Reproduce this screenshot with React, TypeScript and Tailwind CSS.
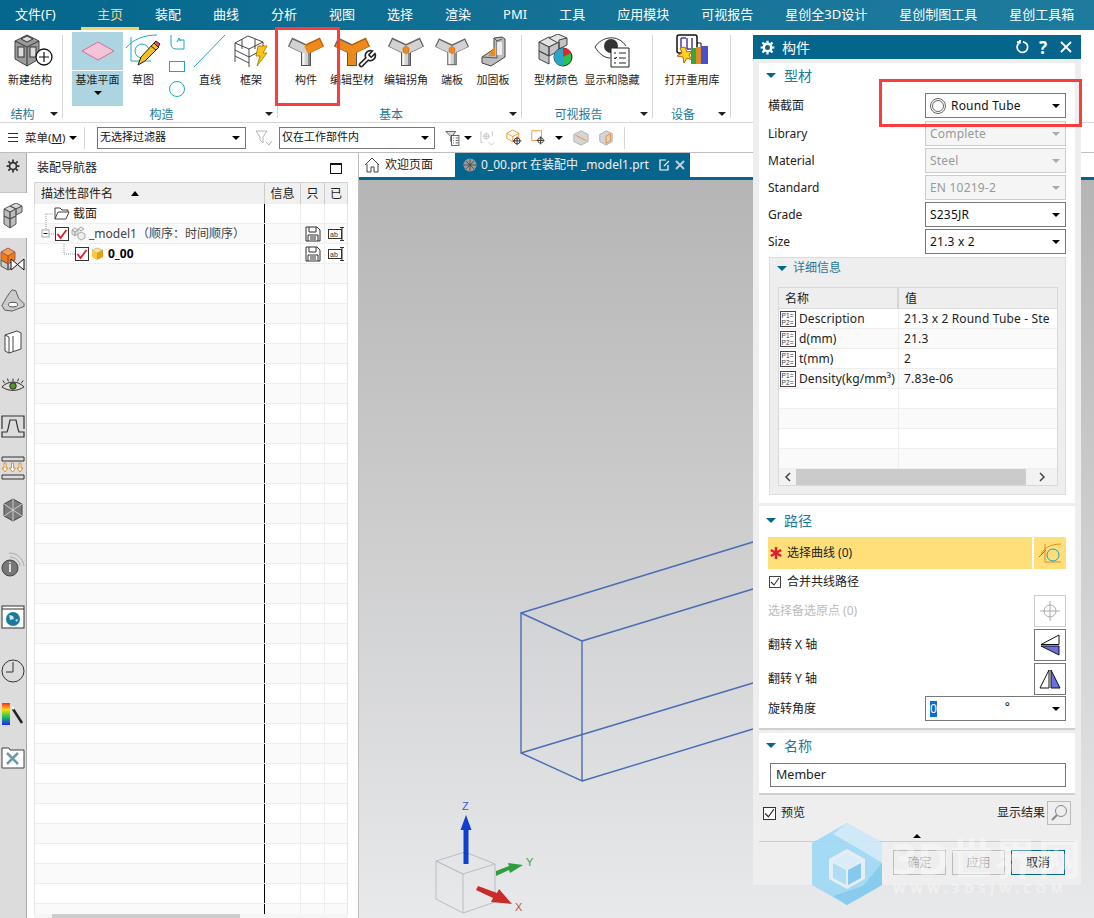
import React from "react";

const FONT = '"Noto Sans","Noto Sans CJK SC",sans-serif';

const Caret = ({ c = "border-t-black", cls = "" }: { c?: string; cls?: string }) => (
  <span className={`inline-block w-0 h-0 border-l-[4px] border-r-[4px] border-t-[4px] border-l-transparent border-r-transparent ${c} ${cls}`} />
);

const YJoint = ({ arms = "edit", w = 36 }: { arms?: "member" | "edit" | "corner"; w?: number }) => {
  const orange = "#ee8a1c";
  const gray = "#d2d2d2";
  const left = arms === "edit" ? orange : gray;
  const right = arms === "corner" ? gray : orange;
  const down = arms === "edit" ? orange : gray;
  return (
    <svg width={w} height={32} viewBox="0 0 36 32">
      <g strokeLinecap="butt" fill="none">
        <path d="M18 14V31" stroke="#555" strokeWidth="10" />
        <path d="M19 15L2 7" stroke="#666" strokeWidth="10" />
        <path d="M17 15L34 7" stroke={right === orange ? "#b85f08" : "#666"} strokeWidth="10" />
        <path d="M18 15V30" stroke={down} strokeWidth="8" />
        <path d="M18 15L3 8" stroke={left} strokeWidth="8" />
        <path d="M18 15L33 8" stroke={right} strokeWidth="8" />
        <path d="M15.5 18V30" stroke="#f6f6f6" strokeWidth="2" opacity={arms === "edit" ? 0 : 1} />
        <path d="M21 18V30" stroke="#8a8a8a" strokeWidth="2" opacity={arms === "edit" ? 0 : 1} />
        {arms === "corner" && <path d="M15 13l3-2 3 2v4l-3 2-3-2z" fill={orange} stroke="#b85f08" strokeWidth=".5" />}
      </g>
    </svg>
  );
};

const Wrench = () => (
  <svg width="20" height="20" viewBox="0 0 24 24" className="absolute right-0 bottom-0" fill="#fff" stroke="#222" strokeWidth="2">
    <path d="M14.7 6.3a1 1 0 0 0 0 1.4l1.6 1.6a1 1 0 0 0 1.4 0l3.77-3.77a6 6 0 0 1-7.94 7.94l-6.91 6.91a2.12 2.12 0 0 1-3-3l6.91-6.91a6 6 0 0 1 7.94-7.94z" />
  </svg>
);

const StructIcon = () => (
  <svg width="46" height="36" viewBox="0 0 46 36">
    <path d="M8 8l12-6 12 6v18l-12 7-12-7z" fill="#9a9a9a" stroke="#444" />
    <path d="M8 8l12 6 12-6M20 14v19" stroke="#333" fill="none" />
    <rect x="11" y="14" width="6" height="10" fill="#ddd" stroke="#333" />
    <rect x="23" y="14" width="6" height="10" fill="#ddd" stroke="#333" />
    <path d="M14 6l6-3 6 3-6 3z" fill="#ddd" stroke="#333" />
    <circle cx="37" cy="24" r="8" fill="#fff" stroke="#111" strokeWidth="1.3" />
    <path d="M32 24h10M37 19v10" stroke="#111" strokeWidth="1.2" />
  </svg>
);

const SketchIcon = () => (
  <svg width="36" height="34" viewBox="0 0 36 34">
    <path d="M1 14C8 5 20 1 32 1" stroke="#1aa7c9" strokeWidth="1" fill="none" />
    <path d="M6 3V27H26" stroke="#1aa7c9" strokeWidth="1" fill="none" />
    <circle cx="17" cy="17" r="7" stroke="#1aa7c9" fill="none" />
    <path d="M13 31l3-8 13-14 5 4-14 14z" fill="#f3c020" stroke="#222" />
    <path d="M26 12l5 4" stroke="#222" />
    <path d="M29 9l2-2 4 3-2 3z" fill="#e25757" stroke="#222" />
  </svg>
);

const FrameIcon = () => (
  <svg width="36" height="34" viewBox="0 0 36 34" fill="none" stroke="#333" strokeWidth=".9">
    <path d="M2 9L15 2l15 6-14 7zM2 9V22M16 15V33M30 8V18M2 16l14 7 13-7M2 22l14 7M2 22v6M9 5v10M22 5v10" />
    <path d="M25 12h9l-4 7h4l-10 13 3-10h-4z" fill="#f7c513" stroke="#a36f00" strokeWidth=".8" />
  </svg>
);

const GussetIcon = () => (
  <svg width="26" height="32" viewBox="0 0 26 32">
    <path d="M2 22L14 14V3l8-1 3 2v18L11 31 2 28z" fill="#bdbdbd" stroke="#444" />
    <path d="M14 3l3 3 5-2M17 6v17L2 22" fill="none" stroke="#555" />
    <path d="M8 21l7-10v10z" fill="#ee8a1c" />
    <rect x="17" y="7" width="5" height="13" fill="#ededed" />
  </svg>
);

const ColorIcon = () => (
  <svg width="36" height="34" viewBox="0 0 36 34">
    <g fill="#c4c4c4" stroke="#444">
      <path d="M1 8l10-5 10 5-10 5z" fill="#e3e3e3" />
      <path d="M11 4l9-4 9 4-9 5z" fill="#e3e3e3" />
      <path d="M1 8v9l10 5v-9zM11 13v9l10-5V8zM21 6v9l8-4V4zM1 17v8l10 5v-8z" />
    </g>
    <circle cx="25" cy="23" r="9" fill="#27c44a" stroke="#222" />
    <path d="M25 23V14a9 9 0 0 1 8 5z" fill="#e4262c" />
    <path d="M25 23V32a9 9 0 0 1-9-9 9 9 0 0 1 9-9z" fill="#2aa7c6" />
  </svg>
);

const EyeListIcon = () => (
  <svg width="36" height="34" viewBox="0 0 36 34">
    <path d="M1 13C8 2 24 0 32 12" fill="#fff" stroke="#333" />
    <path d="M1 13C5 20 11 24 16 24" fill="none" stroke="#333" />
    <circle cx="17" cy="12" r="7" fill="#333" />
    <path d="M17 14h18v19H17z" fill="#fff" stroke="#222" />
    <path d="M20 19h2M25 19h7M20 24l1 1 2-2M25 24h7M20 29h2M25 29h7" stroke="#222" />
  </svg>
);

const LibIcon = () => (
  <svg width="36" height="34" viewBox="0 0 36 34">
    <rect x="3" y="1" width="20" height="18" rx="2" fill="#fff" stroke="#111" strokeWidth="1.5" />
    <path d="M7 4v11M13 4v11M18 4v11M7 4h5M13 15h5" stroke="#4d3aa5" strokeWidth="1.5" />
    <path d="M23 9h4v5" stroke="#111" fill="none" />
    <rect x="17" y="14" width="5" height="16" fill="#3ba53b" />
    <rect x="22" y="13" width="5" height="17" fill="#e08a25" />
    <rect x="27" y="12" width="7" height="18" fill="#4850cc" />
    <path d="M11 13l2 5 5-1-3 4 3 5-5-2-3 5-1-6-6-1 5-3-2-5z" fill="#f7d620" stroke="#d05d10" />
  </svg>
);

const SmallIcons = () => (
  <div className="w-[28px] flex flex-col items-center pt-[2px]">
    <svg width="16" height="16" viewBox="0 0 16 16" fill="none" stroke="#1aa7c9"><path d="M2 0v9c0 3 2 5 5 5h8V5H9M8 7l2-4 2 3" /></svg>
    <div className="w-[16px] h-[11px] border border-[#1aa7c9] mt-[10px]" />
    <div className="w-[16px] h-[16px] rounded-full border border-[#1aa7c9] mt-[9px]" />
  </div>
);

const RItem = ({ w, label, children }: { w: string; label: string; children?: React.ReactNode }) => (
  <div className={`flex flex-col items-center ${w}`}>
    <div className="h-[36px] w-full flex items-center justify-center relative">{children}</div>
    <div className="mt-[2px] text-[11px] leading-[18px] text-[#222] whitespace-nowrap">{label}</div>
  </div>
);

const RGroup = ({ w, label, pl, children }: { w: string; label: string; pl: string; children?: React.ReactNode }) => (
  <div className={`${w} h-full flex flex-col relative`}>
    <div className={`flex flex-1 ${pl} pt-[3px]`}>{children}</div>
    <div className="flex items-center h-[16px]">
      <div className="flex-1 text-center text-[12px] leading-[16px] text-[#1b7a9c] pt-[1px]">{label}</div>
      <div className="w-[18px] flex justify-center"><Caret c="border-t-[#222]" /></div>
    </div>
    <div className="absolute right-0 top-[5px] bottom-[4px] w-px bg-[#d6d6d6]" />
  </div>
);

const Ribbon = () => (
  <div className="h-[93px] bg-white border-b border-[#d5d5d5] flex shrink-0">
    <RGroup w="w-[63px]" label="结构" pl="pl-0">
      <RItem w="w-[60px]" label="新建结构"><StructIcon /></RItem>
    </RGroup>
    <RGroup w="w-[215px]" label="构造" pl="pl-[9px]">
      <div className="w-[51px] h-[74px] -mt-[1px] flex flex-col gap-px">
        <div className="h-[38px] bg-[#add5e1] flex items-center justify-center">
          <svg width="34" height="20" viewBox="0 0 34 20"><path d="M1 10L17 1l16 9-16 9z" fill="#f3c3d8" stroke="#d86d8d" /></svg>
        </div>
        <div className="flex-1 bg-[#add5e1] flex flex-col items-center">
          <span className="text-[11px] leading-[18px] text-[#222]">基准平面</span>
          <Caret cls="mt-[2px]" />
        </div>
      </div>
      <RItem w="w-[40px]" label="草图"><SketchIcon /></RItem>
      <SmallIcons />
      <RItem w="w-[38px]" label="直线">
        <svg width="34" height="34" viewBox="0 0 34 34"><path d="M1 33L32 1" stroke="#1aa7c9" fill="none" /></svg>
      </RItem>
      <RItem w="w-[44px]" label="框架"><FrameIcon /></RItem>
    </RGroup>
    <RGroup w="w-[244px]" label="基本" pl="pl-[7px]">
      <RItem w="w-[42px]" label="构件"><YJoint arms="member" /></RItem>
      <RItem w="w-[50px]" label="编辑型材"><YJoint arms="edit" /><Wrench /></RItem>
      <RItem w="w-[58px]" label="编辑拐角"><YJoint arms="corner" /></RItem>
      <RItem w="w-[34px]" label="端板"><YJoint arms="corner" w={34} /></RItem>
      <RItem w="w-[48px]" label="加固板"><GussetIcon /></RItem>
    </RGroup>
    <RGroup w="w-[131px]" label="可视报告" pl="pl-[5px]">
      <RItem w="w-[58px]" label="型材颜色"><ColorIcon /></RItem>
      <RItem w="w-[54px]" label="显示和隐藏"><EyeListIcon /></RItem>
    </RGroup>
    <RGroup w="w-[78px]" label="设备" pl="pl-[4px]">
      <RItem w="w-[70px]" label="打开重用库"><LibIcon /></RItem>
    </RGroup>
  </div>
);

const TopMenu = () => {
  const tabs = ["装配", "曲线", "分析", "视图", "选择", "渲染", "PMI", "工具", "应用模块", "可视报告", "星创全3D设计", "星创制图工具", "星创工具箱"];
  return (
    <div className="h-[30px] shrink-0 bg-gradient-to-r from-[#05678d] to-[#1d7c9e] flex items-center pl-[15px] text-[13px] text-white">
      <span className="w-[41px] whitespace-nowrap">文件(F)</span>
      <div className="ml-[25px] w-[58px] h-full flex items-center justify-center border-b-[3px] border-[#f9cf6a] pt-[2px] text-[#fbd478]">主页</div>
      <div className="flex gap-[32px] ml-[16px]">
        {tabs.map((t) => <span key={t} className="whitespace-nowrap">{t}</span>)}
      </div>
    </div>
  );
};

const ToolSelect = ({ w, text }: { w: string; text: string }) => (
  <div className={`${w} h-[22px] border border-[#777] bg-white flex items-center pl-[2px] pr-[5px] text-[11px] text-[#111]`}>
    <span className="flex-1 whitespace-nowrap">{text}</span>
    <Caret />
  </div>
);

const Toolbar = () => (
  <div className="h-[30px] shrink-0 bg-white border-b border-[#bdbdbd] flex items-center">
    <div className="ml-[8px] w-[10px] flex flex-col gap-[3px]">
      <div className="h-px bg-[#333]" /><div className="h-px bg-[#333]" /><div className="h-px bg-[#333]" />
    </div>
    <span className="ml-[7px] w-[41px] text-[11.5px] text-[#222] whitespace-nowrap">菜单(<u>M</u>)</span>
    <Caret cls="ml-[3px]" />
    <div className="ml-[7px] mr-[12px] w-px h-[22px] bg-[#d5d5d5]" />
    <ToolSelect w="w-[149px]" text="无选择过滤器" />
    <svg width="18" height="18" viewBox="0 0 18 18" className="ml-[9px]" fill="none" stroke="#b5b5b5"><path d="M1 2h11L8 8v6L5 11V8zM11 13l3 3 3-4" /></svg>
    <div className="w-[6px]" />
    <ToolSelect w="w-[156px]" text="仅在工作部件内" />
    <svg width="18" height="18" viewBox="0 0 22 20" className="ml-[10px]" fill="none" stroke="#444"><path d="M1 2h12L9 8v8L7 14V8z" fill="#ddd" /><rect x="8" y="7" width="9" height="12" fill="#fff" /><path d="M10 10h1M13 10h3M10 13h1M13 13h3M10 16h1M13 16h3" /></svg>
    <Caret cls="ml-[1px]" />
    <svg width="16" height="18" viewBox="0 0 18 20" className="ml-[8px]" fill="none" stroke="#c4c4c4"><path d="M2 3H1v12h2M13 3h1v5" /><circle cx="7" cy="8" r="3" /><path d="M3 8h8M7 4v8M10 15l3 3 3-3" /></svg>
    <svg width="17" height="17" viewBox="0 0 20 20" className="ml-[10px]" fill="none" stroke="#ee8a1c"><path d="M1 5l7-4 7 4v6l-7 4-7-4zM1 5l7 4 7-4M8 9v6" /><circle cx="13" cy="14" r="3.5" stroke="#222" /><path d="M8 14h10M13 9v10" stroke="#222" /></svg>
    <svg width="16" height="16" viewBox="0 0 20 20" className="ml-[8px]" fill="none"><rect x="1" y="1" width="12" height="12" stroke="#ee8a1c" /><circle cx="12" cy="13" r="3.5" stroke="#222" /><path d="M7 13h10M12 8v10" stroke="#222" /></svg>
    <Caret cls="ml-[8px]" />
    <svg width="16" height="16" viewBox="0 0 18 18" className="ml-[10px]"><path d="M1 5l8-4 8 4v8l-8 4-8-4z" fill="#d5d5d5" stroke="#aaa" /><path d="M3 6l12 6" stroke="#ee8a1c" /></svg>
    <svg width="16" height="16" viewBox="0 0 18 18" className="ml-[9px]"><path d="M2 5l7-4 7 3v9l-7 4-7-4z" fill="#d5d5d5" stroke="#aaa" /><path d="M9 7l5-3v8l-5 3z" fill="none" stroke="#ee8a1c" /></svg>
    <div className="ml-[10px] w-px h-[22px] bg-[#d5d5d5]" />
  </div>
);

const sideIcons: { mt: string; icon: React.ReactNode }[] = [
  { mt: "mt-[15px]", icon: <svg width="26" height="24" viewBox="0 0 26 26"><path d="M1 19C4 14 8 6 12 2l4 1 3 8 6 6v3L12 25 4 24z" fill="#ccc" stroke="#555" /><ellipse cx="13" cy="18" rx="5" ry="2.5" fill="#fff" stroke="#444" /></svg> },
  { mt: "mt-[16px]", icon: <svg width="20" height="26" viewBox="0 0 20 26" fill="#fff" stroke="#444"><path d="M2 6l12-4 4 2v16l-12 4-4-2zM6 8v16M6 8L2 6M10 7v15" /></svg> },
  { mt: "mt-[18px]", icon: <svg width="24" height="16" viewBox="0 0 26 16"><path d="M1 9C8 2 18 2 25 9c-7 5-17 5-24 0z" fill="#ddd" stroke="#222" /><circle cx="13" cy="8" r="3.5" fill="#5c9128" stroke="#222" /><path d="M4 5L2 2M8 3L7 0M13 3V0M18 3l1-3M22 5l2-3" stroke="#222" /></svg> },
  { mt: "mt-[15px]", icon: <svg width="24" height="24" viewBox="0 0 24 24" fill="none" stroke="#333" strokeWidth="1.2"><path d="M1 14V1h22v13M1 17h5l1-3L9 5h6l2 9 1 3h5v5H1z" /></svg> },
  { mt: "mt-[15px]", icon: <svg width="24" height="24" viewBox="0 0 24 24"><path d="M1 1h22v4H1zM1 19h22v4H1z" fill="none" stroke="#333" /><path d="M3 7v5H1l3 4 3-4H5V7zM10.500 7v5h-2l3 4 3-4h-2V7zM18 7v5h-2l3 4 3-4h-2V7z" fill="#fff" stroke="#ee8a1c" /></svg> },
  { mt: "mt-[16px]", icon: <svg width="22" height="24" viewBox="0 0 22 24"><path d="M11 1l9 5v12l-9 5-9-5V6z" fill="#7a7a7a" stroke="#444" /><path d="M11 1v22M2 6l18 12M20 6L2 18" stroke="#ccc" /></svg> },
  { mt: "mt-[29px]", icon: <svg width="24" height="26" viewBox="0 0 24 26"><circle cx="9" cy="16" r="8" fill="#777" stroke="#444" /><path d="M9 12v8M9 10v1" stroke="#fff" strokeWidth="1.5" /><path d="M8 1c8 0 14 5 15 13M9 5c5 0 10 4 10 9" fill="none" stroke="#aaa" /></svg> },
  { mt: "mt-[26px]", icon: <svg width="24" height="24" viewBox="0 0 24 24"><rect x="1" y="1" width="22" height="22" fill="#fff" stroke="#333" /><path d="M1 4h22" stroke="#333" /><circle cx="12" cy="14" r="7" fill="#1a7a9c" /><path d="M8 10l4 1 1 3-4 1zM14 15l3-1-1 3z" fill="#cfe4ee" /></svg> },
  { mt: "mt-[28px]", icon: <svg width="24" height="24" viewBox="0 0 24 24" fill="none" stroke="#333"><circle cx="12" cy="12" r="11" /><path d="M12 3v10H5" /></svg> },
  { mt: "mt-[17px]", icon: <svg width="24" height="24" viewBox="0 0 24 24"><defs><linearGradient id="sp" x1="0" y1="0" x2="0" y2="1"><stop offset="0" stopColor="#f22" /><stop offset=".3" stopColor="#fd0" /><stop offset=".6" stopColor="#2c4" /><stop offset="1" stopColor="#22f" /></linearGradient></defs><rect x="1" y="1" width="8" height="22" fill="url(#sp)" /><path d="M12 7l9 14" stroke="#222" strokeWidth="2.5" /><path d="M11 5l2 2" stroke="#fff" strokeWidth="2" /></svg> },
  { mt: "mt-[17px]", icon: <svg width="24" height="24" viewBox="0 0 24 24"><path d="M1 3h7l1 2h14v18H1z" fill="#fff" stroke="#444" /><path d="M6 8l11 11M17 8L6 19" stroke="#6a9aa8" strokeWidth="2.5" /></svg> },
];

const Sidebar = () => (
  <div className="w-[27px] shrink-0 bg-[#dcdcdc] border-r border-[#aaa] flex flex-col items-center">
    <div className="w-full h-[40px] flex justify-center pt-[6px] border-b border-[#c5c5c5]">
      <svg width="14" height="14" viewBox="0 0 24 24" fill="none" stroke="#333" strokeWidth="3"><circle cx="12" cy="12" r="6" /><path d="M12 1v4M12 19v4M1 12h4M19 12h4M4 4l3 3M17 17l3 3M20 4l-3 3M7 17l-3 3" /></svg>
    </div>
    <div className="w-[27px] h-[45px] bg-white flex items-center justify-center">
      <svg width="20" height="26" viewBox="0 0 20 26"><path d="M1 6l6-3 6 3-6 3zM7 3l6-3 6 3-6 3z" fill="#d8d8d8" stroke="#555" /><path d="M1 6v7l6 3V9zM7 9v7l6-3V6zM13 6v6l6-3V3zM1 13v8l6 4v-9zM7 16v9l6-4v-8z" fill="#bdbdbd" stroke="#555" /></svg>
    </div>
    <div className="w-full flex justify-center pt-[6px]">
      <svg width="26" height="28" viewBox="0 0 26 28"><path d="M1 8l7-4 7 4-7 4z" fill="#f2a24a" stroke="#a55" /><path d="M1 8v8l7 4v-8zM8 12v8l7-4V8z" fill="#ee7d12" stroke="#a55" /><path d="M1 16v6l7 4v-6zM8 20v6l4-2" fill="#ccc" stroke="#555" /><path d="M11 15l13 11V15L11 26z" fill="#fff" stroke="#111" /></svg>
    </div>
    {sideIcons.map((s, i) => (
      <div key={i} className={`${s.mt} h-[26px] flex items-center justify-center`}>{s.icon}</div>
    ))}
  </div>
);

const Check = () => (
  <span className="w-[14px] h-[14px] border border-[#333] bg-white flex items-center justify-center shrink-0">
    <svg width="12" height="12" viewBox="0 0 12 12" fill="none" stroke="#e01b2f" strokeWidth="1.8"><path d="M1.5 6l3 4 6-8" /></svg>
  </span>
);

const SaveIcon = () => (
  <svg width="16" height="16" viewBox="0 0 16 16" fill="none" stroke="#333"><path d="M1 1h11l3 3v11H1zM4 1v5h7V1M3 15V9h10v6M5 11h6M5 13h6" /></svg>
);
const AbIcon = () => (
  <svg width="17" height="14" viewBox="0 0 17 14" fill="none" stroke="#333"><rect x=".5" y="2.5" width="13" height="9" /><text x="2" y="9.5" fontSize="7" fill="#333" stroke="none" fontFamily="Liberation Sans">ab</text><path d="M12 .5h4M14 .5v13M12 13.500h4" /></svg>
);

const Navigator = () => {
  const rows = Array.from({ length: 36 }, (_, i) => i);
  return (
    <div className="w-[332px] shrink-0 bg-white pl-[7px] pr-[10px] border-r border-[#bdbdbd] flex flex-col relative">
      <div className="h-[29px] flex items-center justify-between pl-[3px] pr-[6px] pt-[1px]">
        <span className="text-[12px] text-[#222]">装配导航器</span>
        <span className="w-[12px] h-[11px] border border-[#111] border-t-[2px]" />
      </div>
      <div className="border-t border-[#d5d5d5] border-l border-r flex h-[22px] bg-[#f0f0f0] text-[12px] text-[#222] items-center">
        <div className="w-[230px] flex items-center pl-[6px] border-r border-[#ccc] h-full">
          <span>描述性部件名</span>
          <span className="ml-[18px] w-0 h-0 border-l-[4.5px] border-r-[4.5px] border-b-[5px] border-l-transparent border-r-transparent border-b-black" />
        </div>
        <div className="w-[36px] text-center border-r border-[#ccc] h-full leading-[22px]">信息</div>
        <div className="w-[24px] text-center border-r border-[#ccc] h-full leading-[22px]">只</div>
        <div className="flex-1 text-center leading-[22px]">已</div>
      </div>
      <div className="flex-1 overflow-hidden relative border-l border-r border-[#e5e5e5]">
        {rows.map((i) => (
          <div key={i} className={`h-[20px] flex border-b border-[#eeeeee] ${i % 2 === 1 ? "bg-[#fafafa]" : "bg-white"}`}>
            <div className="w-[230px] border-r border-black flex items-center text-[12px] text-[#222] whitespace-nowrap">
              {i === 0 && (
                <div className="flex items-center pl-[19px]">
                  <svg width="16" height="13" viewBox="0 0 16 13" fill="#fff" stroke="#444"><path d="M1 12V1h5l2 2h6v2M1 12l3-7h11l-3 7z" /></svg>
                  <span className="ml-[3px]">截面</span>
                </div>
              )}
              {i === 1 && (
                <div className="flex items-center pl-[20px]">
                  <Check />
                  <svg width="15" height="15" viewBox="0 0 15 15" className="ml-[2px]" fill="#eee" stroke="#aaa"><path d="M1 4l3-2 3 2-3 2zM7 3l3-2 3 2-3 2zM1 4v4l3 2V6zM4 6v4l3-2V4zM7 8v4l3 2 4-2V8l-4-2z" /></svg>
                  <span className="ml-[3px] text-[#444]">_model1（顺序：时间顺序）</span>
                </div>
              )}
              {i === 2 && (
                <div className="flex items-center pl-[40px]">
                  <Check />
                  <svg width="13" height="13" viewBox="0 0 13 13" className="ml-[2px]"><path d="M1 3l5-2 6 2-6 3z" fill="#ffe78a" stroke="#a87" strokeWidth=".5" /><path d="M1 3v7l5 3V6z" fill="#f7c93a" /><path d="M6 6v7l6-3V3z" fill="#e0a21a" /></svg>
                  <span className="ml-[4px] font-bold text-[12px] text-black">0_00</span>
                </div>
              )}
            </div>
            <div className="w-[36px] border-r border-[#eeeeee]" />
            <div className="w-[24px] border-r border-[#eeeeee] flex items-center justify-center">{(i === 1 || i === 2) && <SaveIcon />}</div>
            <div className="flex-1 flex items-center justify-center">{(i === 1 || i === 2) && <AbIcon />}</div>
          </div>
        ))}
        <svg width="40" height="60" viewBox="0 0 40 60" className="absolute left-0 top-0 pointer-events-none" fill="none" stroke="#999" strokeDasharray="1 1">
          <path d="M11 10V25M10.500 10H18M14 30H20M29 40V50H40" />
          <rect x="7" y="26" width="7" height="7" stroke="#aaa" strokeDasharray="none" fill="#fff" />
          <path d="M8.500 29.500h4" stroke="#222" strokeDasharray="none" />
        </svg>
      </div>
      <div className="h-[4px] relative bg-[#f5f5f5]">
        <div className="h-full w-[188px] ml-[18px] bg-[#ccc]" />
      </div>
    </div>
  );
};

const TabBar = () => (
  <div className="h-[27px] shrink-0 bg-white flex border-b-[3px] border-[#05658d]">
    <div className="w-[96px] flex items-center pl-[5px] text-[12px] text-[#222]">
      <svg width="16" height="16" viewBox="0 0 16 16" fill="none" stroke="#444"><path d="M1 8l7-7 7 7M3 7v8h4v-5h3v5h4V7" /></svg>
      <span className="ml-[5px]">欢迎页面</span>
    </div>
    <div className="w-[235px] bg-[#05658d] flex items-center pl-[8px] text-[12px] text-[#f0f0f0] whitespace-nowrap">
      <svg width="14" height="14" viewBox="0 0 14 14"><circle cx="7" cy="7" r="6.5" fill="#9b9b9b" /><path d="M7 1v12M1 7h12M3 3l8 8M11 3l-8 8" stroke="#444" strokeWidth=".8" /></svg>
      <span className="ml-[4px] flex-1">0_00.prt 在装配中 _model1.prt</span>
      <svg width="11" height="12" viewBox="0 0 11 12" fill="none" stroke="#fff" strokeWidth="1.2"><path d="M7 1H1v10h8V6M5 7l5-5" /></svg>
      <svg width="10" height="10" viewBox="0 0 10 10" className="ml-[5px] mr-[5px]" stroke="#c5d4da" strokeWidth="1.8"><path d="M1 1l8 8M9 1l-8 8" /></svg>
    </div>
    <div className="flex-1" />
  </div>
);

const Viewport = () => (
  <div className="flex-1 relative overflow-hidden bg-gradient-to-b from-[#b5b5b5] to-[#e8e9eb]">
    <svg width="735" height="738" viewBox="359 180 735 738" className="absolute left-0 top-0" fill="none">
      <g stroke="#4a6db5" strokeWidth="1.4">
        <path d="M521 613L753 542M582 641L753 589M521 753L753 683M582 781L753 729" />
        <path d="M521 613L582 641V781L521 753z" />
      </g>
      <g stroke="#bdbdbd" strokeWidth="1">
        <path d="M436 861l29-9 30 12-32 10zM436 861v38l27 14v-39zM463 913l32-11v-38" fill="none" />
      </g>
      <path d="M463.500 864V830h-3l5.500-15 5.500 15h-3v34z" fill="#0f3fcf" />
      <path d="M496 871l13-5-1-3 15 2-13 8-1-3-13 6z" fill="#2f9e3f" />
      <path d="M478 886l19 7 2-4 13 15-21-2 2-4-17-8z" fill="#c92a2a" />
      <text x="462" y="810" fontSize="11" fill="#3d59d6" fontFamily="Liberation Sans">Z</text>
      <text x="526" y="866" fontSize="11" fill="#4a9d5a" fontFamily="Liberation Sans">Y</text>
      <text x="515" y="911" fontSize="11" fill="#d24a4a" fontFamily="Liberation Sans">X</text>
    </svg>
  </div>
);

const Tri = () => (
  <span className="w-0 h-0 border-l-[5px] border-r-[5px] border-t-[5px] border-l-transparent border-r-transparent border-t-[#05658d] shrink-0" />
);

const SecHead = ({ title, cls }: { title: string; cls: string }) => (
  <div className={`flex items-center pl-[7px] pb-[2px] ${cls}`}>
    <Tri />
    <span className="ml-[8px] text-[14px] text-[#1b7a9c]">{title}</span>
  </div>
);

const Sel = ({ text, disabled, icon }: { text: string; disabled?: boolean; icon?: boolean }) => (
  <div className={`w-[141px] h-[25px] border flex items-center text-[12px] ${disabled ? "border-[#ccc] bg-[#f5f5f5] text-[#999]" : "border-[#777] bg-white text-[#111]"}`}>
    {icon && <span className="ml-[4px] mr-[5px] w-[16px] h-[16px] rounded-full border-[3px] border-double border-[#666]" />}
    <span className={`flex-1 whitespace-nowrap tracking-[0.2px] ${icon ? "" : "pl-[4px]"}`}>{text}</span>
    <Caret c={disabled ? "border-t-[#aaa]" : "border-t-black"} cls="mr-[5px]" />
  </div>
);

const FormRow = ({ label, children, cls = "" }: { label: string; children: React.ReactNode; cls?: string }) => (
  <div className={`flex items-center justify-between pl-[9px] pr-[9px] ${cls}`}>
    <span className="text-[12px] text-[#222] whitespace-nowrap">{label}</span>
    {children}
  </div>
);

const P12 = () => (
  <svg width="16" height="16" viewBox="0 0 16 16" className="ml-[1px] mr-[3px] shrink-0">
    <rect x=".5" y=".5" width="15" height="15" fill="#fff" stroke="#444" />
    <text x="1.500" y="7" fontSize="6.500" fill="#333" fontFamily="Liberation Sans">P1=</text>
    <text x="1.500" y="14" fontSize="6.500" fill="#333" fontFamily="Liberation Sans">P2=</text>
  </svg>
);

const DetailTable = () => {
  const rows: [string, string][] = [
    ["Description", "21.3 x 2 Round Tube - Ste"],
    ["d(mm)", "21.3"],
    ["t(mm)", "2"],
    ["Density(kg/mm³)", "7.83e-06"],
    ["", ""], ["", ""], ["", ""], ["", ""],
  ];
  return (
    <div className="mx-[8px] mt-[7px] w-[280px] h-[199px] border border-[#d8d8d8] bg-white flex flex-col overflow-hidden">
      <div className="h-[21px] bg-[#eeeeee] flex items-center text-[12px] text-[#222] border-b border-[#ddd]">
        <div className="w-[120px] pl-[6px] border-r-2 border-[#d5d5d5] h-full leading-[22px]">名称</div>
        <div className="pl-[6px] pt-[2px]">值</div>
      </div>
      {rows.map((r, i) => (
        <div key={i} className={`h-[20px] shrink-0 flex text-[12px] text-[#222] border-b border-[#eeeeee] ${i % 2 ? "bg-[#fafafa]" : "bg-white"}`}>
          <div className="w-[120px] flex items-center border-r border-[#eeeeee] whitespace-nowrap overflow-hidden tracking-[0.1px]">
            {r[0] && <P12 />}
            {r[0]}
          </div>
          <div className="pl-[5px] flex-1 leading-[19px] whitespace-nowrap overflow-hidden tracking-[0.15px]">{r[1]}</div>
        </div>
      ))}
      <div className="flex-1 flex items-center bg-[#f2f2f2] min-h-0">
        <span className="w-[17px] text-center text-[#444]"><svg width="8" height="10" viewBox="0 0 8 10" className="mx-auto" fill="none" stroke="#444" strokeWidth="1.5"><path d="M6 1L2 5l4 4" /></svg></span>
        <div className="w-[230px] h-full bg-[#cbcbcb]" />
        <span className="flex-1 text-center"><svg width="8" height="10" viewBox="0 0 8 10" className="mx-auto" fill="none" stroke="#444" strokeWidth="1.5"><path d="M2 1l4 4-4 4" /></svg></span>
      </div>
    </div>
  );
};

const IconBtn = ({ children, disabled, bg }: { children: React.ReactNode; disabled?: boolean; bg?: string }) => (
  <div className={`w-[32px] h-[32px] flex items-center justify-center ${bg ?? ""} ${bg ? "" : disabled ? "border border-[#ccc]" : "border border-[#777]"}`}>{children}</div>
);

const Dialog = () => (
  <div className="absolute left-[753px] top-[35px] w-[328px] h-[850px] bg-[#eeeeee] flex flex-col">
    <div className="h-[24px] bg-[#05658d] flex items-center pl-[7px] pr-[9px] text-white shrink-0">
      <svg width="15" height="15" viewBox="0 0 24 24" fill="none" stroke="#fff" strokeWidth="4"><circle cx="12" cy="12" r="6" /><path d="M12 1v4M12 19v4M1 12h4M19 12h4M4 4l3 3M17 17l3 3M20 4l-3 3M7 17l-3 3" strokeWidth="3.500" /></svg>
      <span className="ml-[7px] text-[14px] flex-1">构件</span>
      <svg width="14" height="14" viewBox="0 0 14 14" fill="none" stroke="#fff" strokeWidth="1.8"><path d="M3 3a5.300 5.300 0 1 0 4-1.200M1 2l3 .5L4 0" /></svg>
      <span className="ml-[9px] text-[17px] font-bold leading-none">?</span>
      <svg width="12" height="12" viewBox="0 0 12 12" className="ml-[13px]" stroke="#fff" strokeWidth="1.8"><path d="M1 1l10 10M11 1L1 11" /></svg>
    </div>
    <div className="px-[6px] pt-[4px] flex flex-col">
      <div className="h-[440px] bg-white flex flex-col">
        <SecHead title="型材" cls="h-[26px]" />
        <div className="pt-[4px] flex flex-col gap-[2px]">
          <FormRow label="横截面" cls="mb-[1px]"><Sel text="Round Tube" icon /></FormRow>
          <FormRow label="Library"><Sel text="Complete" disabled /></FormRow>
          <FormRow label="Material"><Sel text="Steel" disabled /></FormRow>
          <FormRow label="Standard"><Sel text="EN 10219-2" disabled /></FormRow>
          <FormRow label="Grade"><Sel text="S235JR" /></FormRow>
          <FormRow label="Size"><Sel text="21.3 x 2" /></FormRow>
        </div>
        <div className="mt-[3px] ml-[10px] w-[297px] h-[238px] bg-[#eeeeee] border border-[#ddd]">
          <div className="h-[22px] flex items-center pl-[7px] pb-[2px]">
            <Tri />
            <span className="ml-[6px] text-[12px] text-[#1b7a9c]">详细信息</span>
          </div>
          <DetailTable />
        </div>
      </div>
      <div className="mt-[3px] h-[224px] bg-white border-b-2 border-[#cfcfcf] flex flex-col">
        <SecHead title="路径" cls="h-[31px]" />
        <div className="flex pl-[9px] pr-[9px] gap-[2px]">
          <div className="flex-1 h-[32px] bg-[#fedf7a] flex items-center pl-[2px] text-[12px] text-[#222]">
            <svg width="12" height="12" viewBox="0 0 12 12" stroke="#e01b2f" strokeWidth="2.400" className="mr-[5px]"><path d="M6 0v12M.8 3l10.400 6M11.200 3L.8 9" /></svg>
            <span>选择曲线 (0)</span>
          </div>
          <IconBtn bg="bg-[#fedf7a]">
            <svg width="24" height="24" viewBox="0 0 24 24" fill="none"><path d="M3 13C6 7 13 3 23 3M7 3V21H23" stroke="#e78a25" /><circle cx="15" cy="14" r="6" stroke="#1a9dc7" /><path d="M1 16L8 9" stroke="#1a9dc7" /></svg>
          </IconBtn>
        </div>
        <div className="h-[25px] flex items-center pl-[10px] text-[12px] text-[#222]">
          <span className="w-[12px] h-[12px] border border-[#444] flex items-center justify-center"><svg width="10" height="10" viewBox="0 0 10 10" fill="none" stroke="#333" strokeWidth="1.100"><path d="M1 5l3 3 5-7" /></svg></span>
          <span className="ml-[6px]">合并共线路径</span>
        </div>
        <FormRow label="选择备选原点 (0)" cls="h-[33px] [&>span]:text-[#bbb]">
          <IconBtn disabled><svg width="22" height="22" viewBox="0 0 22 22" fill="none" stroke="#aaa"><circle cx="11" cy="11" r="6" /><path d="M11 1v20M1 11h20" /></svg></IconBtn>
        </FormRow>
        <div className="h-[1px]" />
        <FormRow label="翻转 X 轴" cls="h-[33px]">
          <IconBtn><svg width="22" height="24" viewBox="0 0 22 24" stroke="#111"><path d="M20 2v9.500L2 11.500z" fill="#fff" /><path d="M20 13v9L2 13z" fill="#6b70e0" /></svg></IconBtn>
        </FormRow>
        <div className="h-[1px]" />
        <FormRow label="翻转 Y 轴" cls="h-[33px]">
          <IconBtn><svg width="24" height="22" viewBox="0 0 24 22" stroke="#111"><path d="M11 2v18H2z" fill="#fff" /><path d="M13 2v18h9z" fill="#6b70e0" /></svg></IconBtn>
        </FormRow>
        <div className="h-[1px]" />
        <FormRow label="旋转角度">
          <div className="w-[141px] h-[25px] border border-[#777] flex items-center pl-[4px] pr-[5px] text-[12px] text-[#111] relative">
            <span className="bg-[#0a6fd1] text-white w-[7px] leading-[16px] text-center">0</span>
            <span className="flex-1 text-right pr-[42px] leading-[14px] -mt-[4px]">°</span>
            <Caret />
          </div>
        </FormRow>
      </div>
      <div className="mt-[3px] h-[62px] bg-white border-b-2 border-[#cfcfcf]">
        <SecHead title="名称" cls="h-[27px]" />
        <div className="mx-[11px] h-[24px] mt-[3px] w-[296px] border border-[#777] flex items-center pl-[5px] text-[12.500px] text-[#222]">Member</div>
      </div>
      <div className="h-[32px] flex items-center justify-between pl-[4px] pr-[4px] mt-[2px]">
        <div className="flex items-center text-[12px] text-[#222]">
          <span className="w-[13px] h-[13px] border border-[#333] bg-white flex items-center justify-center"><svg width="11" height="11" viewBox="0 0 10 10" fill="none" stroke="#333" strokeWidth="1.100"><path d="M1 5l3 3 5-7" /></svg></span>
          <span className="ml-[5px]">预览</span>
        </div>
        <div className="flex items-center text-[12px] text-[#222] gap-[2px]">
          <span>显示结果</span>
          <span className="w-[24px] h-[24px] border border-[#bbb] flex items-center justify-center">
            <svg width="18" height="18" viewBox="0 0 18 18" fill="none" stroke="#888"><circle cx="11" cy="7" r="5.500" /><path d="M7 11l-5 5" strokeWidth="2" /></svg>
          </span>
        </div>
      </div>
      <div className="flex justify-center h-[9px] items-end">
        <span className="w-0 h-0 border-l-[4.5px] border-r-[4.5px] border-b-[4px] border-l-transparent border-r-transparent border-b-black" />
      </div>
      <div className="mt-[3px] border-t border-[#ccc] flex justify-end gap-[6px] pr-[10px] pt-[8px] text-[12px]">
        <div className="w-[53px] h-[25px] border border-[#bbb] text-[#aaa] flex items-center justify-center">确定</div>
        <div className="w-[53px] h-[25px] border border-[#bbb] text-[#aaa] flex items-center justify-center">应用</div>
        <div className="w-[54px] h-[25px] border border-[#05658d] text-[#222] flex items-center justify-center">取消</div>
      </div>
    </div>
  </div>
);

const Watermark = () => (
  <>
    <svg width="72" height="84" viewBox="0 0 72 84" className="absolute left-[811px] top-[822px] opacity-90">
      <path d="M36 1l35 20v42L36 83 1 63V21z" fill="#9ed8f5" />
      <path d="M36 1l35 20v20L50 28 22 12z" fill="#cde9f8" />
      <path d="M71 41v22L36 83 22 74l30-10z" fill="#7ec9ee" />
      <path d="M36 27l18 10v20L36 67 18 57V37z" fill="#e5eef5" />
      <path d="M36 31l14 8-14 8-14-8z" fill="#d8ecf8" />
      <path d="M22 41l13 7v15l-13-7z" fill="#a8dcf6" />
      <path d="M50 41l-13 7v15l13-7z" fill="#7cc6ec" />
    </svg>
    <div className="absolute left-[892px] top-[835px] text-[43px] leading-[48px] font-bold text-white/40 whitespace-nowrap tracking-[1px]">3D世界网</div>
    <div className="absolute left-[893px] top-[881px] text-[13px] leading-[14px] font-bold text-white/40 whitespace-nowrap tracking-[4.6px]">WWW.3DSJW.COM</div>
  </>
);

export default function App() {
  return (
    <div className="relative w-[1094px] h-[918px] overflow-hidden bg-white flex flex-col" style={{ fontFamily: FONT }}>
      <TopMenu />
      <Ribbon />
      <Toolbar />
      <div className="flex-1 flex min-h-0">
        <Sidebar />
        <Navigator />
        <div className="flex-1 flex flex-col min-w-0">
          <TabBar />
          <Viewport />
        </div>
      </div>
      <Dialog />
      <div className="absolute left-[275px] top-[27px] w-[65px] h-[79px] border-[3px] border-[#fa3c3c]" />
      <div className="absolute left-[879px] top-[79px] w-[203px] h-[48px] border-[3px] border-[#fa3c3c]" />
      <Watermark />
    </div>
  );
}
